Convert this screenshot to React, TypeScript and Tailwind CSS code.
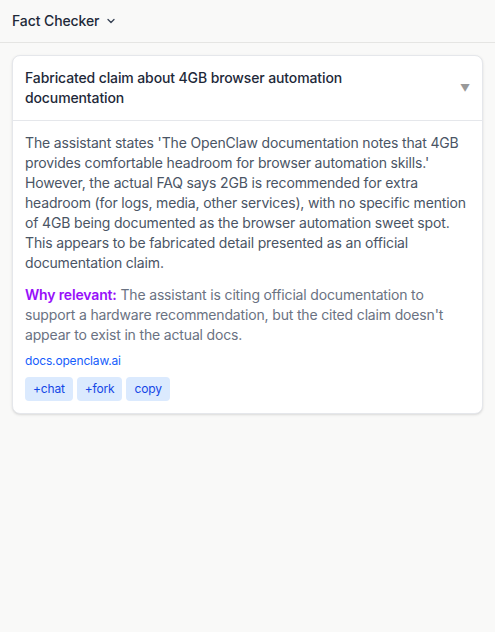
import React from "react";

export default function App() {
  return (
    <div
      className="min-h-[632px] w-full bg-[#f9f9f8] text-gray-800"
      style={{ fontFamily: "Inter, 'Noto Sans', sans-serif" }}
    >
      <div className="flex h-[43px] items-center border-b border-[#e5e5e3] px-3">
        <span className="text-sm font-medium tracking-[-0.1px] text-gray-800">Fact Checker</span>
        <svg className="ml-1.5 h-3 w-3 text-gray-700" viewBox="0 0 12 12" fill="none" stroke="currentColor" strokeWidth="1.3">
          <path d="M3 4.5l3 3 3-3" strokeLinecap="round" strokeLinejoin="round" />
        </svg>
      </div>
      <div className="p-3">
        <div className="rounded-lg border border-gray-200 bg-white shadow-sm">
          <div className="flex items-center justify-between gap-4 border-b border-gray-200 p-3">
            <div className="text-sm font-medium leading-5 tracking-[-0.12px] text-gray-800">
              Fabricated claim about 4GB browser automation
              <br />
              documentation
            </div>
            <span className="text-[10px] text-[#999999]">▼</span>
          </div>
          <div className="p-3 tracking-[-0.16px]">
            <p className="text-sm leading-5 text-gray-600">
              The assistant states 'The OpenClaw documentation notes that 4GB provides comfortable headroom for browser automation skills.' However, the actual FAQ says 2GB is recommended for extra headroom (for logs, media, other services), with no specific mention of 4GB being documented as the browser automation sweet spot. This appears to be fabricated detail presented as an official documentation claim.
            </p>
            <p className="mt-3 text-sm leading-5 text-gray-500">
              <span className="font-semibold text-purple-600">Why relevant:</span> The assistant is citing official documentation to support a hardware recommendation, but the cited claim doesn't appear to exist in the actual docs.
            </p>
            <div className="mt-2 text-xs leading-4 text-blue-600">docs.openclaw.ai</div>
            <div className="mt-2 flex gap-1">
              <button className="rounded bg-blue-100 px-2 py-1 text-xs leading-4 text-blue-700">+chat</button>
              <button className="rounded bg-blue-100 px-2 py-1 text-xs leading-4 text-blue-700">+fork</button>
              <button className="rounded bg-blue-100 px-2 py-1 text-xs leading-4 text-blue-700">copy</button>
            </div>
          </div>
        </div>
      </div>
    </div>
  );
}
